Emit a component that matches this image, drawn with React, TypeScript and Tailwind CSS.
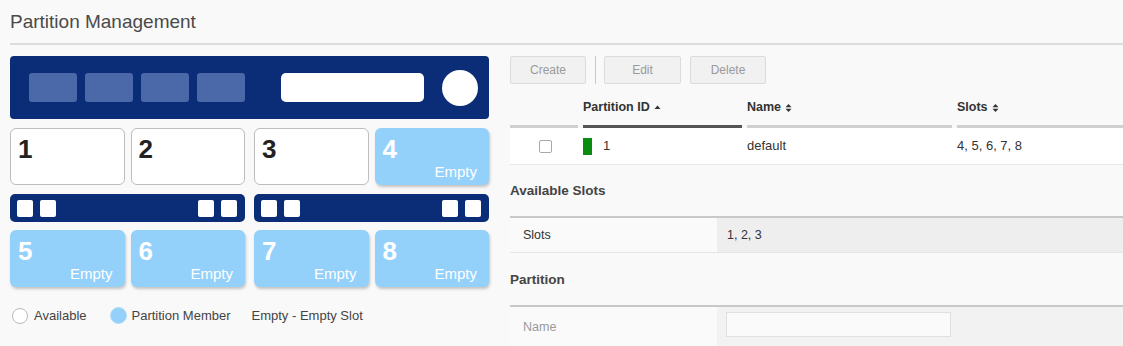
import React from 'react';

type Slot = {
  id: number;
  empty: boolean;
};

const topSlots: Slot[][] = [
  [
    { id: 1, empty: false },
    { id: 2, empty: false },
  ],
  [
    { id: 3, empty: false },
    { id: 4, empty: true },
  ],
];

const bottomSlots: Slot[][] = [
  [
    { id: 5, empty: true },
    { id: 6, empty: true },
  ],
  [
    { id: 7, empty: true },
    { id: 8, empty: true },
  ],
];

const SlotCard: React.FC<{ slot: Slot }> = ({ slot }) => (
  <div
    className={
      slot.empty
        ? 'h-[57px] rounded-[6px] bg-[#93d1fb] shadow-[1px_2px_3px_rgba(0,0,0,0.22)] flex flex-col justify-between pl-[8px] pr-[12px] pt-[8px] pb-[5px] text-white'
        : 'h-[57px] rounded-[6px] bg-white border border-[#bdbdbd] flex flex-col justify-between pl-[7px] pr-[12px] pt-[7px] pb-[5px] text-[#222]'
    }
  >
    <div className="text-[26px] leading-[26px] font-bold">{slot.id}</div>
    {slot.empty && (
      <div className="self-end text-[15px] leading-[17px]">Empty</div>
    )}
  </div>
);

const SlotRow: React.FC<{ groups: Slot[][] }> = ({ groups }) => (
  <div className="grid grid-cols-2 gap-[9px]">
    {groups.map((group, i) => (
      <div key={i} className="grid grid-cols-2 gap-[6px]">
        {group.map((slot) => (
          <SlotCard key={slot.id} slot={slot} />
        ))}
      </div>
    ))}
  </div>
);

const Port = () => (
  <div className="w-[16px] h-[17px] bg-white rounded-[2px]" />
);

const Backplane = () => (
  <div className="h-[28px] rounded-[5px] bg-[#0b2d78] flex items-center justify-between px-[7px] pr-[8px]">
    <div className="flex gap-[7px]">
      <Port />
      <Port />
    </div>
    <div className="flex gap-[7px]">
      <Port />
      <Port />
    </div>
  </div>
);

const SortUp = () => (
  <svg width="7" height="8" viewBox="0 0 7 8" className="ml-[4px]">
    <path d="M0.5 5 L3.5 1.5 L6.5 5 Z" fill="#333" />
  </svg>
);

const SortBoth = () => (
  <svg width="7" height="10" viewBox="0 0 7 10" className="ml-[4px]">
    <path d="M0.5 4.2 L3.5 1 L6.5 4.2 Z" fill="#333" />
    <path d="M0.5 5.8 L3.5 9 L6.5 5.8 Z" fill="#333" />
  </svg>
);

const ToolButton: React.FC<{ label: string; className?: string }> = ({
  label,
  className = '',
}) => (
  <button
    className={`h-[28px] rounded-[2px] border border-[#dcdcdc] bg-[#f1f1f1] text-[12px] text-[#9a9a9a] ${className}`}
  >
    {label}
  </button>
);

export default function App() {
  return (
    <div className="w-[1123px] h-[346px] overflow-hidden bg-[#f9f9f9] font-['Liberation_Sans',Arial,sans-serif]">
      <div className="pl-[10px] pt-[11px]">
        <h1 className="text-[19px] leading-[22px] text-[#4a4a4a]">
          Partition Management
        </h1>
        <div className="mt-[10px] h-[2px] bg-[#dcdcdc]" />
      </div>

      <div className="flex pt-[11px]">
        {/* chassis view */}
        <div className="ml-[10px] w-[479px] shrink-0">
          <div className="h-[63px] rounded-[4px] bg-[#0b2d78] flex items-center pl-[19px] pr-[10px]">
            <div className="flex gap-[8px]">
              <div className="w-[48px] h-[29px] rounded-[3px] bg-[#4b68a9]" />
              <div className="w-[48px] h-[29px] rounded-[3px] bg-[#4b68a9]" />
              <div className="w-[48px] h-[29px] rounded-[3px] bg-[#4b68a9]" />
              <div className="w-[48px] h-[29px] rounded-[3px] bg-[#4b68a9]" />
            </div>
            <div className="ml-[36px] w-[143px] h-[29px] rounded-[5px] bg-white" />
            <div className="ml-[18px] w-[36px] h-[36px] rounded-full bg-white" />
          </div>

          <div className="mt-[9px]">
            <SlotRow groups={topSlots} />
          </div>

          <div className="mt-[9px] grid grid-cols-2 gap-[9px]">
            <Backplane />
            <Backplane />
          </div>

          <div className="mt-[8px]">
            <SlotRow groups={bottomSlots} />
          </div>

          <div className="mt-[20px] flex items-center text-[13px] leading-[16px] text-[#444]">
            <div className="ml-[2px] w-[16px] h-[16px] rounded-full bg-white border border-[#bbb]" />
            <span className="ml-[6px]">Available</span>
            <div className="ml-[23px] w-[17px] h-[17px] rounded-full bg-[#93d1fb] border border-[#b5dcf5]" />
            <span className="ml-[5px]">Partition Member</span>
            <span className="ml-[21px]">Empty - Empty Slot</span>
          </div>
        </div>

        {/* partition table */}
        <div className="ml-[21px] flex-1">
          <div className="flex items-center">
            <ToolButton label="Create" className="w-[76px]" />
            <div className="ml-[9px] w-px h-[28px] bg-[#c8c8c8]" />
            <ToolButton label="Edit" className="ml-[8px] w-[77px]" />
            <ToolButton label="Delete" className="ml-[9px] w-[76px]" />
          </div>

          <div className="mt-[16px] grid grid-cols-[73px_164px_210px_1fr] text-[12.5px] leading-[15px] font-bold text-[#333]">
            <div className="pr-[5px]">
              <div className="h-[15px]" />
              <div className="mt-[10px] h-[3px] bg-[#d0d0d0]" />
            </div>
            <div className="pr-[5px]">
              <div className="flex items-center">
                Partition ID
                <SortUp />
              </div>
              <div className="mt-[10px] h-[3px] bg-[#555]" />
            </div>
            <div className="pr-[5px]">
              <div className="flex items-center">
                Name
                <SortBoth />
              </div>
              <div className="mt-[10px] h-[3px] bg-[#d0d0d0]" />
            </div>
            <div>
              <div className="flex items-center">
                Slots
                <SortBoth />
              </div>
              <div className="mt-[10px] h-[3px] bg-[#d0d0d0]" />
            </div>
          </div>

          <div className="grid grid-cols-[73px_164px_210px_1fr] h-[37px] items-center bg-white border-b border-[#e8e8e8] text-[13px] text-[#333]">
            <div className="flex justify-center pr-[3px]">
              <div className="w-[13px] h-[13px] rounded-[2px] border border-[#a8a8a8] bg-white" />
            </div>
            <div className="flex items-center">
              <div className="w-[9px] h-[17px] bg-[#0a8c12]" />
              <span className="ml-[11px]">1</span>
            </div>
            <div>default</div>
            <div>4, 5, 6, 7, 8</div>
          </div>

          <h2 className="mt-[18px] text-[13.5px] leading-[16px] font-bold text-[#444]">
            Available Slots
          </h2>
          <div className="mt-[17px] h-[2px] bg-[#c8c8c8]" />
          <div className="flex h-[35px] border-b border-[#e6e6e6] text-[12.5px] text-[#333]">
            <div className="w-[207px] flex items-center pl-[13px] bg-[#fafafa]">
              Slots
            </div>
            <div className="flex-1 flex items-center pl-[10px] bg-[#eeeeee]">
              1, 2, 3
            </div>
          </div>

          <h2 className="mt-[19px] text-[13.5px] leading-[16px] font-bold text-[#444]">
            Partition
          </h2>
          <div className="mt-[17px] h-[2px] bg-[#c8c8c8]" />
          <div className="flex h-[40px] text-[12.5px]">
            <div className="w-[207px] flex items-center pl-[13px] text-[#9a9a9a] bg-[#fafafa]">
              Name
            </div>
            <div className="flex-1 pl-[9px] pt-[5px] bg-[#f2f2f2]">
              <input
                className="w-[225px] h-[25px] bg-[#fafafa] border border-[#e0e0e0] outline-none"
                defaultValue=""
              />
            </div>
          </div>
        </div>
      </div>
    </div>
  );
}
